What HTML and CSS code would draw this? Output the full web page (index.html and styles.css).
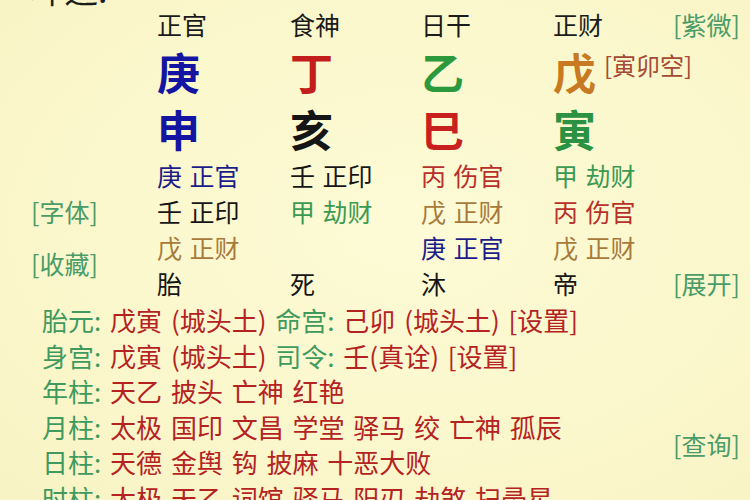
FILE: index.html
```html
<!DOCTYPE html>
<html lang="zh-CN">
<head>
<meta charset="utf-8">
<title>八字排盘</title>
<link rel="stylesheet" href="styles.css">
</head>
<body>
<div class="page">
  <div class="pillars">
    <div class="cell title">坤造:</div>
    <div class="cell head">年柱</div>
    <div class="cell head">月柱</div>
    <div class="cell head">日柱</div>
    <div class="cell head">时柱</div>
    <div class="cell"></div>

    <div class="cell"></div>
    <div class="cell god">正官</div>
    <div class="cell god">食神</div>
    <div class="cell god">日干</div>
    <div class="cell god">正财</div>
    <div class="cell link">[紫微]</div>

    <div class="cell"></div>
    <div class="cell big c-blue">庚</div>
    <div class="cell big c-red">丁</div>
    <div class="cell big c-green">乙</div>
    <div class="cell big-wrap"><span class="big c-orange">戊</span><span class="empty">[寅卯空]</span></div>
    <div class="cell"></div>

    <div class="cell"></div>
    <div class="cell big c-blue">申</div>
    <div class="cell big c-black">亥</div>
    <div class="cell big c-red2">巳</div>
    <div class="cell big c-green2">寅</div>
    <div class="cell"></div>

    <div class="cell"></div>
    <div class="cell hid h-blue">庚 正官</div>
    <div class="cell hid h-black">壬 正印</div>
    <div class="cell hid h-red">丙 伤官</div>
    <div class="cell hid h-green">甲 劫财</div>
    <div class="cell"></div>

    <div class="cell side">[字体]</div>
    <div class="cell hid h-black">壬 正印</div>
    <div class="cell hid h-green">甲 劫财</div>
    <div class="cell hid h-brown">戊 正财</div>
    <div class="cell hid h-red">丙 伤官</div>
    <div class="cell"></div>

    <div class="cell side span2">[收藏]</div>
    <div class="cell hid h-brown">戊 正财</div>
    <div class="cell"></div>
    <div class="cell hid h-blue">庚 正官</div>
    <div class="cell hid h-brown">戊 正财</div>
    <div class="cell"></div>

    <div class="cell hid h-black">胎</div>
    <div class="cell hid h-black">死</div>
    <div class="cell hid h-black">沐</div>
    <div class="cell hid h-black">帝</div>
    <div class="cell link">[展开]</div>
  </div>

  <div class="info">
    <div class="line"><span class="lbl">胎元:</span> 戊寅 (城头土) <span class="lbl">命宫:</span> 己卯 (城头土) [设置]</div>
    <div class="line"><span class="lbl">身宫:</span> 戊寅 (城头土) <span class="lbl">司令:</span> 壬(真诠) [设置]</div>
    <div class="line"><span class="lbl">年柱:</span> 天乙 披头 亡神 红艳</div>
    <div class="line"><span class="lbl">月柱:</span> 太极 国印 文昌 学堂 驿马 绞 亡神 孤辰</div>
    <div class="line"><span class="lbl">日柱:</span> 天德 金舆 钩 披麻 十恶大败</div>
    <div class="line"><span class="lbl">时柱:</span> 太极 天乙 词馆 驿马 阳刃 劫煞 扫帚星</div>
    <div class="query link">[查询]</div>
  </div>
</div>
</body>
</html>
```
FILE: styles.css
```css
html, body {
  margin: 0;
  padding: 0;
}
body {
  width: 750px;
  height: 500px;
  overflow: hidden;
  background: radial-gradient(ellipse at 55% 45%, #fdfbd6 0%, #fbf7cc 60%, #f8f3c4 100%);
  font-family: "Noto Sans CJK SC", "Noto Sans", sans-serif;
  color: #1b1b1b;
}
.page {
  margin-top: -30px;
}
.pillars {
  display: grid;
  grid-template-columns: 157px 133px 131px 132px 120px 1fr;
  grid-template-rows: 36px 36px 58px 57px 36px 36px 36px 36px;
}
.cell {
  display: flex;
  align-items: center;
  font-size: 24px;
  line-height: 1;
  white-space: nowrap;
}
.title {
  font-size: 34px;
  padding-left: 30px;
  align-items: flex-start;
  padding-top: 2px;
}
.head {
  color: #a8a79a;
  font-size: 22px;
  align-items: flex-start;
  padding-top: 6px;
}
.god {
  font-size: 25px;
}
.link {
  color: #4a9c68;
  font-size: 25px;
}
.side {
  color: #4a9c68;
  font-size: 25px;
  padding-left: 31px;
}
.span2 {
  grid-row: span 2;
  padding-bottom: 4px;
}
.big {
  font-size: 43px;
  font-weight: 700;
}
.big-wrap {
  align-items: flex-start;
  gap: 8px;
  padding-top: 8px;
}
.empty {
  color: #a44a36;
  font-size: 24px;
  margin-top: 3px;
}
.c-blue { color: #1414a2; }
.c-red { color: #c21f1c; }
.c-green { color: #2c9a3c; }
.c-orange { color: #c77a22; }
.c-black { color: #151515; }
.c-red2 { color: #c81f1f; }
.c-green2 { color: #2a9242; }
.hid {
  font-size: 25px;
  word-spacing: 2px;
}
.h-blue { color: #1d1d8a; }
.h-black { color: #161616; }
.h-red { color: #b8302a; }
.h-green { color: #3b9a52; }
.h-brown { color: #a87a3c; }

.info {
  display: grid;
  grid-template-columns: 673px 1fr;
  grid-auto-rows: 35.5px;
  margin-top: 1px;
}
.line {
  grid-column: 1;
  display: flex;
  align-items: center;
  padding-left: 42px;
  font-size: 26px;
  word-spacing: 3px;
  color: #b52222;
  white-space: pre;
}
.lbl {
  color: #3f9a5e;
}
.query {
  grid-column: 2;
  grid-row: 4 / 6;
  display: flex;
  align-items: center;
}
```
